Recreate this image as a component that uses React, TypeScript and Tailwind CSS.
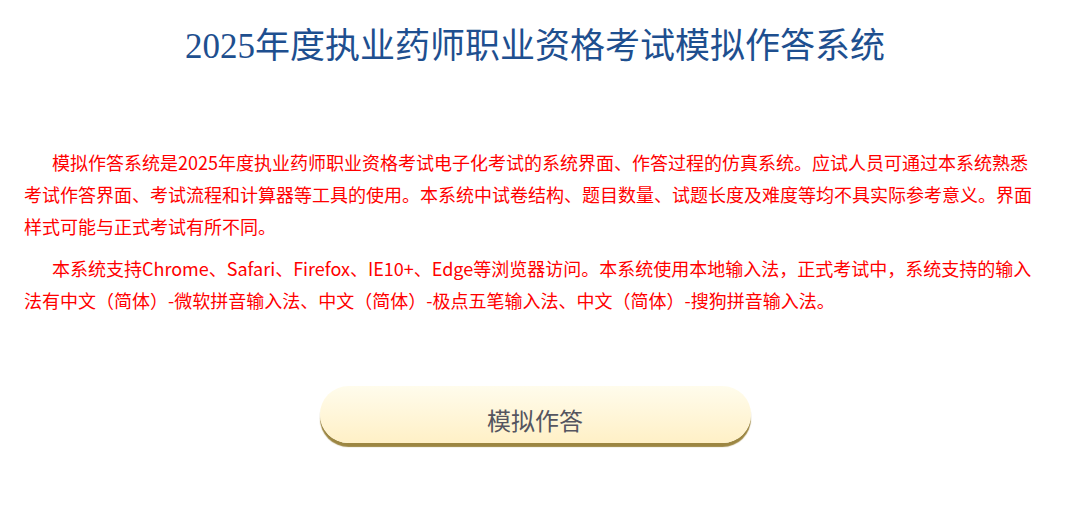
import React from "react";

export default function App() {
  return (
    <div
      className="w-[1070px] min-h-[509px] bg-white"
      style={{ fontFamily: '"Noto Sans CJK SC", "Noto Sans", sans-serif' }}
    >
      <h1 className="pt-[19px] h-[69px] text-center text-[35px] leading-[48px] font-normal text-[#1e4f8f] whitespace-nowrap">
        <span className="font-['Liberation_Serif','Noto_Sans_CJK_SC',serif]">2025</span>
        <span>年度执业药师职业资格考试模拟作答系统</span>
      </h1>
      <div className="mt-[77px] pl-6 pr-[28px] text-[18px] leading-[32px] text-[#ff0000]">
        <p className="indent-[28px] mb-[10px]">
          模拟作答系统是2025年度执业药师职业资格考试电子化考试的系统界面、作答过程的仿真系统。应试人员可通过本系统熟悉考试作答界面、考试流程和计算器等工具的使用。本系统中试卷结构、题目数量、试题长度及难度等均不具实际参考意义。界面样式可能与正式考试有所不同。
        </p>
        <p className="indent-[28px]">
          本系统支持Chrome、Safari、Firefox、IE10+、Edge等浏览器访问。本系统使用本地输入法，正式考试中，系统支持的输入法有中文（简体）-微软拼音输入法、中文（简体）-极点五笔输入法、中文（简体）-搜狗拼音输入法。
        </p>
      </div>
      <div className="mt-[70px] flex justify-center">
        <button className="w-[431px] h-[57px] rounded-full bg-gradient-to-b from-[#fffcec] to-[#fff0c6] shadow-[0_4px_1px_#9c8642] text-[24px] leading-none text-[#555560] flex items-center justify-center pt-[10px]">
          模拟作答
        </button>
      </div>
    </div>
  );
}
